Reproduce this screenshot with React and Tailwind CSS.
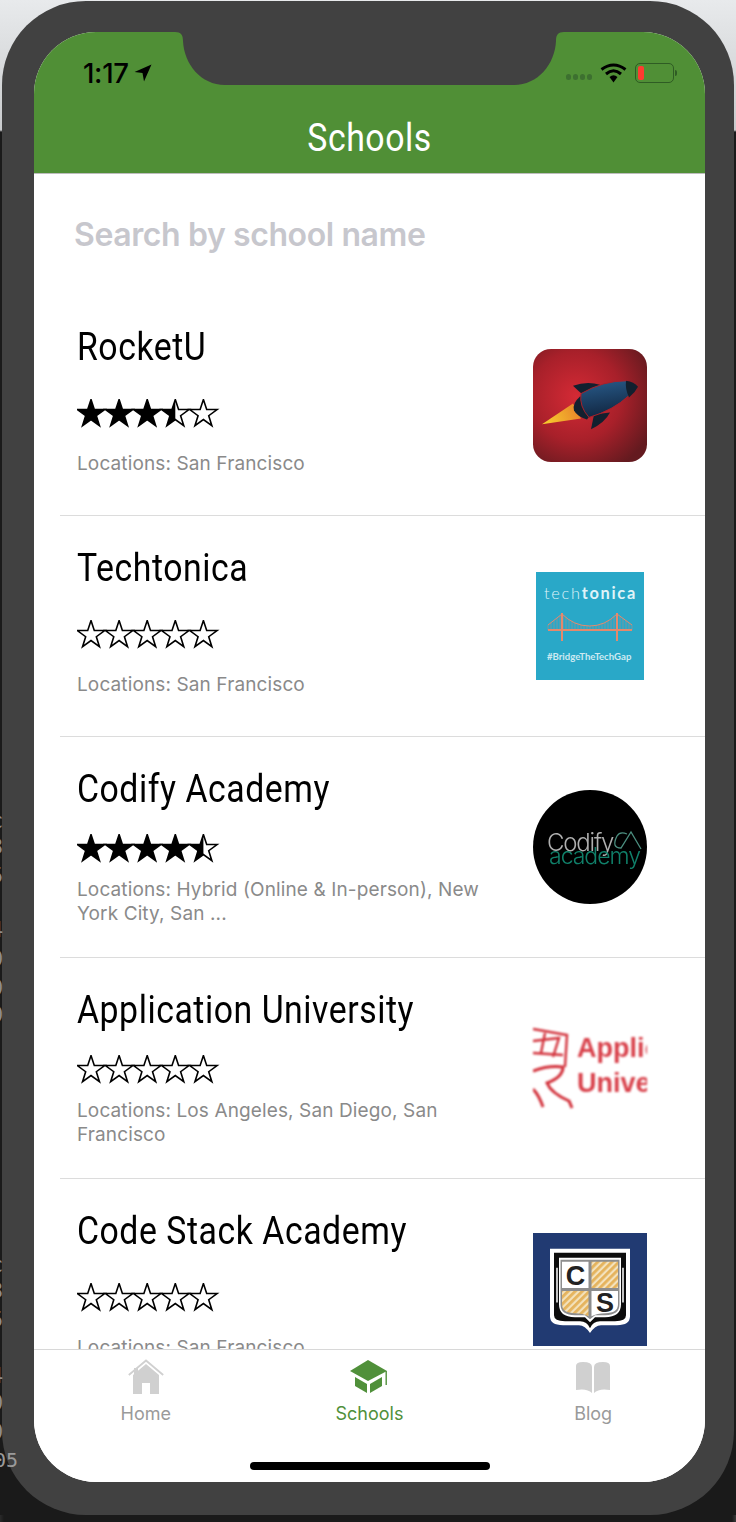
import React from "react";

const starPts = (() => {
  const p = [];
  for (let i = 0; i < 10; i++) {
    const r = i % 2 === 0 ? 14.4 : 5.6;
    const a = -Math.PI / 2 + (i * Math.PI) / 5;
    p.push((14 + r * Math.cos(a)).toFixed(2) + "," + (15 + r * Math.sin(a)).toFixed(2));
  }
  return p.join(" ");
})();

function Stars({ value }) {
  return (
    <svg width="144" height="30" viewBox="0 0 144 30" className="block">
      <defs>
        <clipPath id="half-star">
          <rect x="0" y="0" width="14" height="30" />
        </clipPath>
      </defs>
      {[0, 1, 2, 3, 4].map((i) => (
        <g key={i} transform={`translate(${i * 28.1} 0)`}>
          <polygon points={starPts} fill={value >= i + 1 ? "#000" : "#fff"} stroke="#000" strokeWidth="1.6" strokeLinejoin="miter" />
          {value > i && value < i + 1 ? <polygon points={starPts} fill="#000" clipPath="url(#half-star)" /> : null}
        </g>
      ))}
    </svg>
  );
}

function RocketLogo() {
  return (
    <svg width="114" height="113" viewBox="0 0 114 114" preserveAspectRatio="none" className="block">
      <defs>
        <radialGradient id="rk-bg" cx="0.38" cy="0.42" r="0.72">
          <stop offset="0" stopColor="#d42a35" />
          <stop offset="0.55" stopColor="#a8202a" />
          <stop offset="1" stopColor="#641a1f" />
        </radialGradient>
        <linearGradient id="rk-flame" gradientUnits="userSpaceOnUse" x1="9" y1="76" x2="46" y2="60">
          <stop offset="0" stopColor="#f9d22e" />
          <stop offset="1" stopColor="#e8842a" />
        </linearGradient>
        <linearGradient id="rk-body" x1="0.4" y1="0" x2="0.6" y2="1">
          <stop offset="0" stopColor="#275886" />
          <stop offset="1" stopColor="#10243e" />
        </linearGradient>
      </defs>
      <rect x="0" y="0" width="114" height="114" rx="18" fill="url(#rk-bg)" />
      <path d="M9 76 L40 55 L48 70 Z" fill="url(#rk-flame)" />
      <path d="M40 37 Q54 32 67 36 L52 48 Q45 42 40 37 Z" fill="#12202f" />
      <path d="M58 81 Q72 74 77 64 L61 66 Z" fill="#12202f" />
      <path d="M47 48 Q39 55 41 62 Q44 68 54 71 L62 60 L54 48 Z" fill="#12202f" />
      <path d="M48 45 Q70 32 94 32 L96 47 Q80 62 56 69 Q46 58 48 45 Z" fill="url(#rk-body)" stroke="#a8202a" strokeWidth="1" />
      <path d="M93 32 Q101 33 105 38 Q102 44 96 49 Q92 40 93 32 Z" fill="#12202f" />
    </svg>
  );
}

const hangers = [];
for (let x = 12; x <= 96; x += 3) {
  let y;
  if (x < 26) y = 53 - ((x - 12) / 14) * 11;
  else if (x > 81) y = 42 + ((x - 81) / 15) * 11;
  else {
    const t = (x - 53.5) / 27.5;
    y = 54 - 12 * t * t;
  }
  hangers.push(`M${x} ${y.toFixed(1)} V58`);
}

function TechtonicaLogo() {
  return (
    <svg width="108" height="108" viewBox="0 0 108 108" className="block">
      <rect width="108" height="108" fill="#29a8c8" />
      <text x="8" y="27" fontFamily="Lato, sans-serif" fontSize="16.4" letterSpacing="1.7" fill="#dff3f8">
        <tspan fontWeight="300">tech</tspan>
        <tspan fontWeight="700">tonica</tspan>
      </text>
      <g fill="none" stroke="#e5896c">
        <path d={hangers.join(" ")} strokeWidth="0.6" opacity="0.65" />
        <path d="M12 53 L26 42 Q38 54 53.5 54 Q69 54 81 42 L96 53" strokeWidth="1" />
        <path d="M12 58 H96" strokeWidth="2" />
        <path d="M26 41 V69 M81 41 V69" strokeWidth="2" />
      </g>
      <text x="11" y="88" fontFamily="Lato, sans-serif" fontSize="9.6" fontWeight="700" fill="#cdeaf2">#BridgeTheTechGap</text>
    </svg>
  );
}

function CodifyLogo() {
  return (
    <svg width="114" height="114" viewBox="0 0 114 114" className="block blur-[0.3px]">
      <circle cx="57" cy="57" r="57" fill="#000" />
      <text x="14" y="61" fontFamily="Inter, sans-serif" fontWeight="300" fontSize="24" letterSpacing="-1.2" fill="#b0b0b0">Codify</text>
      <text x="16" y="74" fontFamily="Inter, sans-serif" fontWeight="300" fontSize="23" letterSpacing="-1" fill="#10806a">academy</text>
      <path d="M94 44 Q87 41 84 46 Q78 58 88 58 L98 42 L108 59" fill="none" stroke="#4c8f80" strokeWidth="1.3" />
    </svg>
  );
}

function AppUniLogo() {
  return (
    <svg width="114" height="114" viewBox="0 0 114 114" className="block overflow-hidden blur-[1px]">
      <text x="44" y="46" fontFamily="Liberation Sans, sans-serif" fontWeight="700" fontSize="27" fill="#d83f49">Applic</text>
      <text x="44" y="81" fontFamily="Liberation Sans, sans-serif" fontWeight="700" fontSize="27" fill="#d83f49">Univer</text>
      <g fill="none" stroke="#d2303a" strokeWidth="3">
        <path d="M0 18 L34 24 L32 56 M0 30 L26 27 L20 46 M0 42 L30 44 M12 22 L8 42" strokeWidth="2.4" />
        <path d="M0 60 Q16 54 30 56 Q30 66 14 72 Q18 82 36 90 L39 97" />
        <path d="M0 78 Q6 84 10 96" />
      </g>
    </svg>
  );
}

function CodeStackLogo() {
  return (
    <svg width="114" height="113" viewBox="0 0 114 114" preserveAspectRatio="none" className="block">
      <defs>
        <pattern id="cs-hatch" width="5" height="5" patternUnits="userSpaceOnUse" patternTransform="rotate(45)">
          <rect width="5" height="5" fill="#f3e2bd" />
          <rect width="2.8" height="5" fill="#e5b35c" />
        </pattern>
      </defs>
      <rect width="114" height="114" fill="#213a72" />
      <path d="M17 16 H97 V84 Q97 93 84 93 H68 Q62 93 57 101 Q52 93 46 93 H30 Q17 93 17 84 Z" fill="#fff" />
      <path d="M21 20 H93 V83 Q93 89 82 89 H67 Q60 89 57 96 Q54 89 47 89 H32 Q21 89 21 83 Z" fill="#0c0c0c" />
      <path d="M24 35 V70 M90 35 V70" stroke="#fff" strokeWidth="1.5" />
      <path d="M26 25 H88 V72 Q88 85 72 85 H62 L57 90 L52 85 H42 Q26 85 26 72 Z" fill="#fff" />
      <path d="M27.5 27 H86.5 V72 Q86.5 83 72 83 H62 L57 87 L52 83 H42 Q27.5 83 27.5 72 Z" fill="#8d8d8d" />
      <path d="M29 29 H55.5 V55.5 H29 Z" fill="#fff" />
      <path d="M58.5 29 H85 V55.5 H58.5 Z" fill="url(#cs-hatch)" />
      <path d="M29 58.5 H55.5 V84 Q50 81 42 81 Q29 81 29 72 Z" fill="url(#cs-hatch)" />
      <path d="M58.5 58.5 H85 V72 Q85 81 72 81 Q64 81 58.5 84 Z" fill="#fff" />
      <text x="42.5" y="52.5" textAnchor="middle" fontFamily="Liberation Sans, sans-serif" fontWeight="700" fontSize="27" fill="#222">C</text>
      <text x="72" y="80" textAnchor="middle" fontFamily="Liberation Sans, sans-serif" fontWeight="700" fontSize="27" fill="#222">S</text>
    </svg>
  );
}

function School({ name, rating, loc, compact, logo, last }) {
  return (
    <div className={`ml-[26px] flex h-[221px] shrink-0 items-center pl-[17px] ${last ? "" : "border-b border-[#dcdcdc]"}`}>
      <div className="flex h-full w-[456px] flex-col pt-[30px]">
        <div className="h-[44px] origin-left scale-x-[0.89] whitespace-nowrap font-['Roboto',sans-serif] text-[38px] leading-[44px] tracking-[0.6px] text-black">{name}</div>
        <div className={compact ? "mt-[23px] h-[30px]" : "mt-[30px] h-[30px]"}>
          <Stars value={rating} />
        </div>
        <div className={`${compact ? "mt-[14px]" : "mt-[23px]"} w-[420px] font-['Inter',sans-serif] text-[19px] leading-[24px] tracking-[0.12px] text-[#8a8a8a]`}>{loc}</div>
      </div>
      <div className="flex w-[114px] shrink-0 justify-center">{logo}</div>
    </div>
  );
}

function Tab({ label, active, children }) {
  return (
    <div className="flex flex-col items-center">
      <div className="flex h-[36px] items-center justify-center">{children}</div>
      <div className={`mt-[7px] font-['Inter',sans-serif] text-[18px] leading-[24px] ${active ? "text-[#50903a]" : "text-[#9a9a9a]"}`}>{label}</div>
    </div>
  );
}

const edgeGlyphs = [
  ["c", "top-[808px]"],
  ["3", "top-[834px]"],
  ["5", "top-[863px]"],
  ["-", "top-[897px]"],
  ["4", "top-[917px]"],
  ["0", "top-[946px]"],
  ["0", "top-[975px]"],
  ["0", "top-[1002px]"],
  ["c", "top-[1252px]"],
  ["3", "top-[1278px]"],
  ["5", "top-[1307px]"],
  ["-", "top-[1339px]"],
  ["4", "top-[1363px]"],
  ["0", "top-[1390px]"],
  ["0", "top-[1419px]"],
];

export default function App() {
  return (
    <div className="relative h-[1522px] w-[736px] overflow-hidden bg-[linear-gradient(90deg,#2a2a2a_0,#1a1a1a_4px,#1a1a1a_732px,#3a3a3a_736px)] font-['Inter',sans-serif]">
      <div className="bg-[linear-gradient(180deg,#e8eaec_0,#c9cbcd_130px,#1a1a1a_132px)] pl-[2px] pr-[2px] pt-[1px]">
        <div className="h-[1514px] rounded-[84px] bg-[#414141] pl-[32px] pr-[29px] pt-[31px]">
          <div className="relative flex h-[1450px] flex-col overflow-hidden rounded-[62px] bg-white">
            <header className="h-[142px] shrink-0 border-b border-[#bdbdbd] bg-[#508f36]">
              <div className="flex h-[30px] translate-y-[26px] items-center justify-between pl-[49px] pr-[28px]">
                <div className="flex items-center gap-[5px]">
                  <span className="font-['Inter',sans-serif] text-[27.5px] font-medium leading-[30px] tracking-[-0.3px] text-black">1:17</span>
                  <svg width="18" height="18" viewBox="0 0 18 18" className="block">
                    <path d="M17.5 0.5 L0.5 8 L8.5 9 L10 17.5 Z" fill="#000" />
                  </svg>
                </div>
                <div className="flex items-center">
                  <div className="mr-[8px] mt-[8px] flex gap-[1.5px]">
                    <span className="h-[6px] w-[5.5px] rounded-full bg-[#3d7030]" />
                    <span className="h-[6px] w-[5.5px] rounded-full bg-[#3d7030]" />
                    <span className="h-[6px] w-[5.5px] rounded-full bg-[#3d7030]" />
                    <span className="h-[6px] w-[5.5px] rounded-full bg-[#3d7030]" />
                  </div>
                  <svg width="27" height="20" viewBox="0 0 27 20" className="mr-[8px] block">
                    <g fill="none" stroke="#000" strokeWidth="3">
                      <path d="M1.5 6.5 Q13.5 -2.5 25.5 6.5" />
                      <path d="M6 11 Q13.5 4.5 21 11" />
                    </g>
                    <path d="M9.5 14 Q13.5 10.5 17.5 14 L13.5 19.5 Z" fill="#000" />
                  </svg>
                  <div className="flex items-center">
                    <div className="flex h-[20px] w-[39px] items-center rounded-[5px] border-[1.5px] border-[#2f5c24] pl-[2px]">
                      <div className="h-[14px] w-[6px] rounded-[2px] bg-[#ff3b30]" />
                    </div>
                    <div className="ml-[1px] h-[6px] w-[2px] rounded-r-full bg-[#2f5c24]" />
                  </div>
                </div>
              </div>
              <div className="translate-y-[51px] scale-x-[0.89] text-center font-['Roboto',sans-serif] text-[38px] leading-[50px] tracking-[0.6px] text-white">Schools</div>
            </header>

            <main className="flex min-h-0 flex-1 flex-col overflow-hidden">
              <div className="flex h-[121px] shrink-0 items-center px-[40px] pt-[1px] text-[32px] font-semibold tracking-[-0.4px] text-[#c7c7cd]">Search by school name</div>
              <School name="RocketU" rating={3.5} loc="Locations: San Francisco" logo={<RocketLogo />} />
              <School name="Techtonica" rating={0} loc="Locations: San Francisco" logo={<TechtonicaLogo />} />
              <School name="Codify Academy" rating={4.5} compact loc="Locations: Hybrid (Online & In-person), New York City, San ..." logo={<CodifyLogo />} />
              <School name="Application University" rating={0} compact loc="Locations: Los Angeles, San Diego, San Francisco" logo={<AppUniLogo />} />
              <School name="Code Stack Academy" rating={0} last loc="Locations: San Francisco" logo={<CodeStackLogo />} />
            </main>

            <nav className="grid h-[133px] shrink-0 grid-cols-3 border-t border-[#d8d8d8] bg-white pt-[9px]">
              <Tab label="Home">
                <svg width="36" height="36" viewBox="0 0 36 36" className="block">
                  <path d="M6 9 H10 V14 L6 18 Z" fill="#d0d0d0" />
                  <path d="M0.8 16 L18 1.5 L35.2 16" fill="none" stroke="#d0d0d0" strokeWidth="1.8" />
                  <path d="M18 5 L31 16 V35 H22 V24 H14 V35 H5 V16 Z" fill="#d0d0d0" />
                </svg>
              </Tab>
              <Tab label="Schools" active>
                <svg width="38" height="34" viewBox="0 0 38 34" className="block">
                  <path d="M18 0 L37 11 L18 21 L0 11 Z" fill="#50903a" />
                  <path d="M5 17 L17 24 V33 L5 26 Z" fill="#50903a" />
                  <path d="M20 24 L32 17 V26 L20 33 Z" fill="#50903a" />
                  <path d="M36.2 11 V25" stroke="#50903a" strokeWidth="1.4" />
                </svg>
              </Tab>
              <Tab label="Blog">
                <svg width="36" height="33" viewBox="0 0 36 33" className="block">
                  <path d="M1 5 Q1 1 8 1 Q17 1 17 6 V32 Q12 27 1 29 Z" fill="#d0d0d0" />
                  <path d="M35 5 Q35 1 28 1 Q19 1 19 6 V32 Q24 27 35 29 Z" fill="#d0d0d0" />
                </svg>
              </Tab>
            </nav>

            <svg width="389" height="53" viewBox="0 0 389 53" className="absolute left-[141px] top-0 block">
              <path d="M0 0 C6 0 8 3 8 9 C9 32 26 53 50 53 H339 C363 53 380 32 381 9 C381 3 383 0 389 0 Z" fill="#414141" />
            </svg>
            <div className="absolute bottom-[12px] left-[216px] h-[8px] w-[240px] rounded-full bg-black" />
          </div>
        </div>
      </div>
      {edgeGlyphs.map(([g, top], i) => (
        <span key={i} className={`absolute left-[-10px] ${top} font-['DejaVu_Sans_Mono',monospace] text-[22px] leading-[26px] text-[#8c8c8c]`}>{g}</span>
      ))}
      <span className="absolute left-[-6px] top-[1447px] font-['DejaVu_Sans_Mono',monospace] text-[20px] leading-[26px] text-[#9a9a9a]">05</span>
    </div>
  );
}
